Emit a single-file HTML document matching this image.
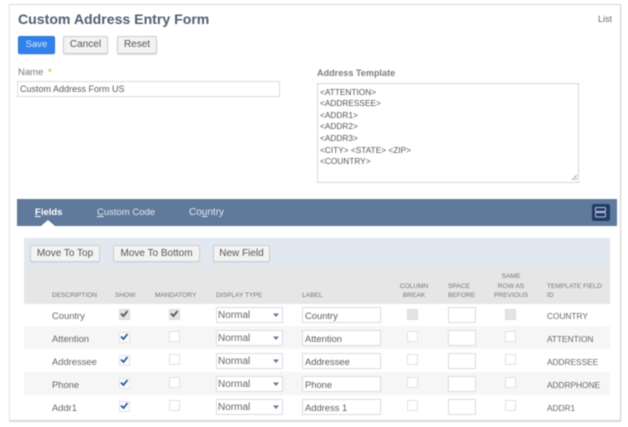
<!DOCTYPE html>
<html><head><meta charset="utf-8">
<style>
html,body{margin:0;padding:0;background:#fff;width:628px;height:427px;overflow:hidden}
#w{position:relative;width:628px;height:427px;filter:blur(.5px);font-family:"Liberation Sans",sans-serif;color:#5f5f5f;font-size:10px}
#w div{position:absolute;box-sizing:border-box}
.t{white-space:nowrap;line-height:12px}
.b{border:1px solid #cdcdcd;border-radius:2px;background:#f3f3f3;color:#555;text-align:center;font-size:10px;line-height:16px;box-shadow:0 1px 1px #ddd}
.i{border:1px solid #dcdcdc;background:#fff;font-size:9.4px;color:#5c5c5c;padding-left:2px;white-space:nowrap;height:16px;line-height:15px}
.s{font-size:10px;padding-left:1px;width:67px;left:216px;line-height:16px;color:#666}
.l{left:302px;width:79px}
.sb{left:448px;width:28px}
.c{width:11px;height:11px;border:1px solid #e2e2e2;background:#fff}
.d{background:#e4e4e4;border-color:#dcdcdc}
.h{font-size:6.6px;color:#777;white-space:nowrap;line-height:9.5px}
.r{font-size:9.4px;color:#666;left:52px}
.id{font-size:8.3px;color:#666;left:547px}
svg{position:absolute;left:0;top:0}
</style></head><body><div id="w">
<div style="left:9px;top:4px;width:612px;height:417px;border:1px solid #d2d2d2;border-left-color:#e6e6e6;border-top-color:#d8d8d8;box-shadow:0 1px 1px #ddd"></div>
<div class="t" style="left:18px;top:10px;font-size:14.1px;line-height:18px;font-weight:bold;color:#4f5f74">Custom Address Entry Form</div>
<div class="t" style="left:598px;top:13px;font-size:9px;color:#666">List</div>
<div class="b" style="left:18px;top:36px;width:37px;height:18px;background:#2f82ea;border-color:#2a74d4;color:#dfeaf8;font-size:9.5px">Save</div>
<div class="b" style="left:63px;top:36px;width:45px;height:18px">Cancel</div>
<div class="b" style="left:117px;top:36px;width:40px;height:18px">Reset</div>
<div class="t" style="left:18px;top:67px;font-size:9.5px;color:#777">Name <span style="color:#d99a2b;margin-left:2px">*</span></div>
<div class="i" style="left:17px;top:81px;width:263px;font-size:9px">Custom Address Form US</div>
<div class="t" style="left:317px;top:67px;font-size:9.1px;font-weight:bold;color:#7d7d7d">Address Template</div>
<div class="i" style="left:317px;top:83px;width:262px;height:100px;border-color:#d8d8d8"></div>
<div class="t" style="left:320px;top:86.500px;font-size:8.3px;line-height:11.65px;color:#555;white-space:pre">&lt;ATTENTION&gt;
&lt;ADDRESSEE&gt;
&lt;ADDR1&gt;
&lt;ADDR2&gt;
&lt;ADDR3&gt;
&lt;CITY&gt; &lt;STATE&gt; &lt;ZIP&gt;
&lt;COUNTRY&gt;</div>
<svg width="628" height="427"><path d="M572 180l5-5M575 180l2-2" stroke="#aaa" fill="none"/></svg>

<div style="left:17px;top:199px;width:600px;height:27px;background:#5f7a9b"></div>
<div class="t" style="left:35px;top:207px;font-size:9.5px;font-weight:bold;color:#fff"><u>F</u>ields</div>
<div class="t" style="left:97px;top:207px;font-size:9.5px;color:#e3e9f1"><u>C</u>ustom Code</div>
<div class="t" style="left:189px;top:207px;font-size:10px;color:#e3e9f1">Co<u>u</u>ntry</div>
<svg width="628" height="427"><path d="M41 226l7-6 7 6z" fill="#fff"/></svg>
<div style="left:591.500px;top:204px;width:18px;height:17px;background:#223c66;border-radius:2px"></div>
<svg width="628" height="427"><rect x="595.500" y="207.500" width="10" height="4" rx="1" fill="none" stroke="#b9c5d6"/><rect x="595.500" y="212.500" width="10" height="4.500" rx="1" fill="none" stroke="#b9c5d6"/></svg>

<div style="left:24px;top:238px;width:586px;height:29px;background:#e2e8f0"></div>
<div class="b" style="left:30px;top:245px;width:70px;height:17px">Move To Top</div>
<div class="b" style="left:113px;top:245px;width:87px;height:17px">Move To Bottom</div>
<div class="b" style="left:213px;top:245px;width:57px;height:17px">New Field</div>

<div style="left:24px;top:267px;width:586px;height:37px;background:#e6e6e6"></div>
<div class="h" style="left:52px;top:291px">DESCRIPTION</div>
<div class="h" style="left:115px;top:291px">SHOW</div>
<div class="h" style="left:155px;top:291px">MANDATORY</div>
<div class="h" style="left:216px;top:291px">DISPLAY TYPE</div>
<div class="h" style="left:302px;top:291px">LABEL</div>
<div class="h" style="left:390px;top:281.500px;width:48px;text-align:center">COLUMN<br>BREAK</div>
<div class="h" style="left:448px;top:281.500px">SPACE<br>BEFORE</div>
<div class="h" style="left:487px;top:272px;width:48px;text-align:center">SAME<br>ROW AS<br>PREVIOUS</div>
<div class="h" style="left:547px;top:281.500px">TEMPLATE FIELD<br>ID</div>

<div style="left:24px;top:326px;width:586px;height:23px;background:#f6f6f6"></div>
<div style="left:24px;top:372px;width:586px;height:23px;background:#f6f6f6"></div>

<!-- Row 1 -->
<div class="t r" style="top:310px">Country</div>
<div class="c d" style="left:119px;top:309px"></div><div class="c d" style="left:169px;top:309px"></div>
<div class="i s" style="top:307px">Normal</div>
<div class="i l" style="top:307px">Country</div>
<div class="c d" style="left:407px;top:309px"></div><div class="i sb" style="top:307px"></div><div class="c d" style="left:505px;top:309px"></div>
<div class="t id" style="top:310px">COUNTRY</div>
<!-- Row 2 -->
<div class="t r" style="top:333px">Attention</div>
<div class="c" style="left:119px;top:332px"></div><div class="c" style="left:169px;top:331px"></div>
<div class="i s" style="top:330px">Normal</div>
<div class="i l" style="top:330px">Attention</div>
<div class="c" style="left:407px;top:331px"></div><div class="i sb" style="top:330px"></div><div class="c" style="left:505px;top:331px"></div>
<div class="t id" style="top:333px">ATTENTION</div>
<!-- Row 3 -->
<div class="t r" style="top:356px">Addressee</div>
<div class="c" style="left:119px;top:355px"></div><div class="c" style="left:169px;top:354px"></div>
<div class="i s" style="top:353px">Normal</div>
<div class="i l" style="top:353px">Addressee</div>
<div class="c" style="left:407px;top:354px"></div><div class="i sb" style="top:353px"></div><div class="c" style="left:505px;top:354px"></div>
<div class="t id" style="top:356px">ADDRESSEE</div>
<!-- Row 4 -->
<div class="t r" style="top:379px">Phone</div>
<div class="c" style="left:119px;top:378px"></div><div class="c" style="left:169px;top:377px"></div>
<div class="i s" style="top:376px">Normal</div>
<div class="i l" style="top:376px">Phone</div>
<div class="c" style="left:407px;top:377px"></div><div class="i sb" style="top:376px"></div><div class="c" style="left:505px;top:377px"></div>
<div class="t id" style="top:379px">ADDRPHONE</div>
<!-- Row 5 -->
<div class="t r" style="top:402px">Addr1</div>
<div class="c" style="left:119px;top:401px"></div><div class="c" style="left:169px;top:400px"></div>
<div class="i s" style="top:399px">Normal</div>
<div class="i l" style="top:399px">Address 1</div>
<div class="c" style="left:407px;top:400px"></div><div class="i sb" style="top:399px"></div><div class="c" style="left:505px;top:400px"></div>
<div class="t id" style="top:402px">ADDR1</div>

<svg width="628" height="427">
<g fill="none" stroke-width="1.8">
<path d="M121 313.500l2.500 2.500 4-5" stroke="#555"/>
<path d="M171 313.500l2.500 2.500 4-5" stroke="#555"/>
<path d="M121 336.500l2.500 2.500 4-5" stroke="#2a5a9e"/>
<path d="M121 359.500l2.500 2.500 4-5" stroke="#2a5a9e"/>
<path d="M121 382.500l2.500 2.500 4-5" stroke="#2a5a9e"/>
<path d="M121 405.500l2.500 2.500 4-5" stroke="#2a5a9e"/>
</g>
<g fill="#5f7a9b">
<path d="M273 313.500h6l-3 3.500z"/><path d="M273 336.500h6l-3 3.500z"/><path d="M273 359.500h6l-3 3.500z"/><path d="M273 382.500h6l-3 3.500z"/><path d="M273 405.500h6l-3 3.500z"/>
</g>
</svg>
</div></body></html>
